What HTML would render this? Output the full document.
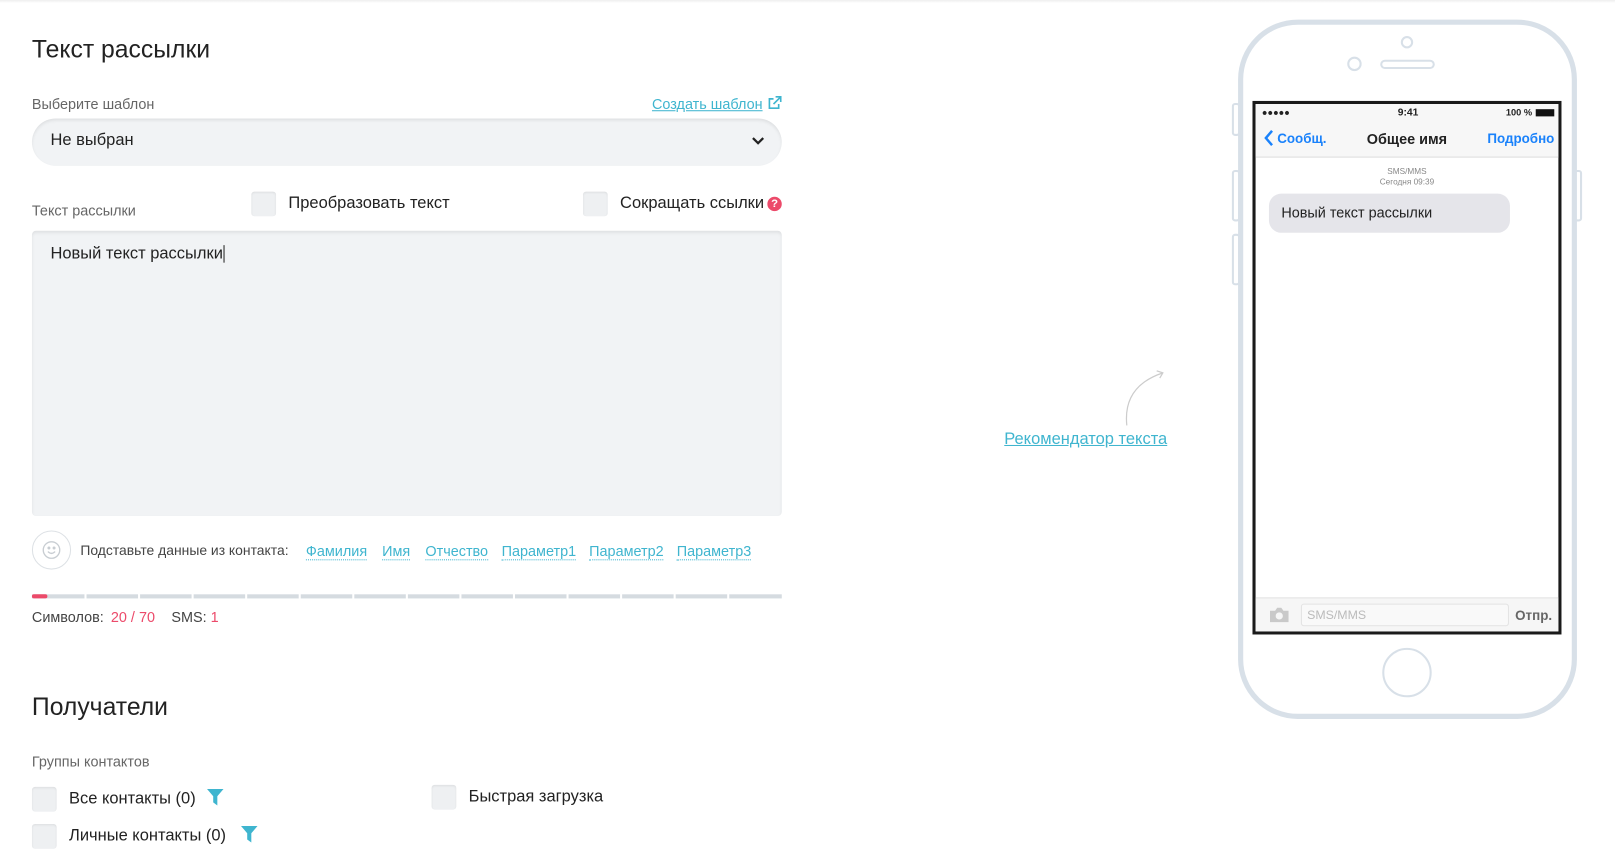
<!DOCTYPE html>
<html><head><meta charset="utf-8"><style>
*{margin:0;padding:0;box-sizing:border-box}
body{width:1615px;height:853px;background:#fff;font-family:"Liberation Sans",sans-serif;color:#222;position:relative;overflow:hidden}
#w{position:absolute;left:0;top:0;width:1568px;height:828px;transform:scale(1.03);transform-origin:0 0}
.a{position:absolute;white-space:nowrap}
.lbl{font-size:14px;color:#666}
.cb{position:absolute;width:24px;height:24px;background:#eef0f2;border-radius:3px;box-shadow:inset 0 1px 2px rgba(0,0,0,.08)}
.lnk{color:#3fb5cf;text-decoration:underline}
.dl{color:#3fb5cf;border-bottom:1px dotted #3fb5cf;font-size:14px}
.seg{position:absolute;top:577px;height:4px;background:#d5dbe0}
</style></head><body>
<div class="a" style="left:0;top:0;width:1615px;height:3px;background:linear-gradient(#eee,#fff)"></div>
<div id="w">
<div class="a" style="left:31px;top:35px;font-size:24px;color:#222">Текст рассылки</div>
<div class="a lbl" style="left:31px;top:93px">Выберите шаблон</div>
<div class="a lnk" style="left:633px;top:93px;font-size:14px">Создать шаблон </div>
<svg class="a" style="left:745px;top:93px" width="14" height="14" viewBox="0 0 14 14" fill="none" stroke="#3fb5cf" stroke-width="1.6"><path d="M11 8v4H2V3h4M8 1h5v5M13 1L6 8"/></svg>
<div class="a" style="left:31px;top:115px;width:728px;height:46px;border-radius:23px;background:#f1f3f5;box-shadow:inset 0 2px 3px rgba(0,0,0,.08)"></div>
<div class="a" style="left:49px;top:128px;font-size:16px;color:#222">Не выбран</div>
<svg class="a" style="left:729px;top:132px" width="14" height="10" viewBox="0 0 14 10"><path d="M2 2l5 5 5-5" fill="none" stroke="#222" stroke-width="2.2"/></svg>
<div class="a lbl" style="left:31px;top:196px">Текст рассылки</div>
<div class="cb" style="left:244px;top:186px"></div>
<div class="a" style="left:280px;top:189px;font-size:16px">Преобразовать текст</div>
<div class="cb" style="left:566px;top:186px"></div>
<div class="a" style="left:602px;top:189px;font-size:16px">Сокращать ссылки</div>
<div class="a" style="left:745px;top:191px;width:14px;height:14px;border-radius:7px;background:#ec4a6a;color:#fff;font-size:11px;font-weight:bold;text-align:center;line-height:14px">?</div>
<div class="a" style="left:31px;top:224px;width:728px;height:277px;border-radius:4px;background:#f1f3f5;box-shadow:inset 0 2px 3px rgba(0,0,0,.08)"></div>
<div class="a" style="left:49px;top:238px;font-size:16px">Новый текст рассылки<span style="border-left:1px solid #222;margin-left:1px"></span></div>
<div class="a" style="left:31px;top:515px;width:38px;height:38px;border-radius:19px;border:1px solid #dde1e5"></div>
<svg class="a" style="left:40px;top:524px" width="20" height="20" viewBox="0 0 20 20" fill="none" stroke="#c8cdd2" stroke-width="1.3"><circle cx="10" cy="10" r="8"/><circle cx="7.5" cy="8" r=".8" fill="#c8cdd2"/><circle cx="12.5" cy="8" r=".8" fill="#c8cdd2"/><path d="M6.5 11.5q3.5 3.5 7 0"/></svg>
<div class="a" style="left:78px;top:527px;font-size:13.5px;color:#444">Подставьте данные из контакта:</div>
<div class="a dl" style="left:297px;top:527px">Фамилия</div>
<div class="a dl" style="left:371px;top:527px">Имя</div>
<div class="a dl" style="left:413px;top:527px">Отчество</div>
<div class="a dl" style="left:487px;top:527px">Параметр1</div>
<div class="a dl" style="left:572px;top:527px">Параметр2</div>
<div class="a dl" style="left:657px;top:527px">Параметр3</div>
<div class="seg" style="left:31px;width:51px"></div>
<div class="seg" style="left:84px;width:50px"></div>
<div class="seg" style="left:136px;width:50px"></div>
<div class="seg" style="left:188px;width:50px"></div>
<div class="seg" style="left:240px;width:50px"></div>
<div class="seg" style="left:292px;width:50px"></div>
<div class="seg" style="left:344px;width:50px"></div>
<div class="seg" style="left:396px;width:50px"></div>
<div class="seg" style="left:448px;width:50px"></div>
<div class="seg" style="left:500px;width:50px"></div>
<div class="seg" style="left:552px;width:50px"></div>
<div class="seg" style="left:604px;width:50px"></div>
<div class="seg" style="left:656px;width:50px"></div>
<div class="seg" style="left:708px;width:51px"></div>
<div class="seg" style="left:31px;width:15px;background:#ec4a6a;border-radius:2px"></div>
<div class="a" style="left:31px;top:591px;font-size:14px;color:#444">Символов: <span style="color:#ec4a6a;margin-left:3px">20 / 70</span> <span style="margin-left:12px">SMS:</span> <span style="color:#ec4a6a">1</span></div>
<div class="a" style="left:31px;top:673px;font-size:24px">Получатели</div>
<div class="a lbl" style="left:31px;top:731px">Группы контактов</div>
<div class="cb" style="left:31px;top:764px"></div>
<div class="a" style="left:67px;top:767px;font-size:16px">Все контакты (0)</div>
<svg class="a" style="left:200px;top:765px" width="18" height="18" viewBox="0 0 18 18"><path d="M1 1h16l-6 7v9l-4-3V8z" fill="#3fb5cf"/></svg>
<div class="cb" style="left:31px;top:800px"></div>
<div class="a" style="left:67px;top:803px;font-size:16px">Личные контакты (0)</div>
<svg class="a" style="left:233px;top:801px" width="18" height="18" viewBox="0 0 18 18"><path d="M1 1h16l-6 7v9l-4-3V8z" fill="#3fb5cf"/></svg>
<div class="cb" style="left:419px;top:762px"></div>
<div class="a" style="left:455px;top:765px;font-size:16px">Быстрая загрузка</div>
<svg class="a" style="left:1085px;top:355px" width="50" height="60" viewBox="0 0 50 60" fill="none" stroke="#ccc" stroke-width="1.2"><path d="M9 58Q5 20 44 7M38 5l6 2-3 5"/></svg>
<div class="a lnk" style="left:975px;top:418px;font-size:16px">Рекомендатор текста</div>
<div class="a" style="left:1196px;top:100px;width:8px;height:32px;border:2px solid #d8e0e8;border-radius:3px"></div>
<div class="a" style="left:1196px;top:165px;width:8px;height:50px;border:2px solid #d8e0e8;border-radius:3px"></div>
<div class="a" style="left:1196px;top:227px;width:8px;height:50px;border:2px solid #d8e0e8;border-radius:3px"></div>
<div class="a" style="left:1528px;top:165px;width:8px;height:50px;border:2px solid #d8e0e8;border-radius:3px"></div>
<div class="a" style="left:1202px;top:19px;width:329px;height:679px;border:5px solid #d8e0e8;border-radius:58px;background:#fff"></div>
<div class="a" style="left:1360px;top:35px;width:12px;height:12px;border:2px solid #d8e0e8;border-radius:6px"></div>
<div class="a" style="left:1308px;top:55px;width:14px;height:14px;border:2px solid #d8e0e8;border-radius:7px"></div>
<div class="a" style="left:1340px;top:58px;width:53px;height:9px;border:2px solid #d8e0e8;border-radius:5px"></div>
<div class="a" style="left:1342px;top:629px;width:48px;height:48px;border:2px solid #d8e0e8;border-radius:24px"></div>
<div class="a" style="left:1216px;top:98px;width:300px;height:518px;border:3px solid #1a1a1a;background:#fff;overflow:hidden">
 <div style="position:absolute;left:0;top:0;width:294px;height:52px;background:#f7f7f7;border-bottom:1px solid #ddd"></div>
 <div style="position:absolute;left:6px;top:3px;font-size:9px;font-weight:bold">●●●●●</div>
 <div style="position:absolute;left:138px;top:3px;font-size:10px;font-weight:bold">9:41</div>
 <div style="position:absolute;left:243px;top:3px;font-size:9px;font-weight:bold">100 %</div>
 <div style="position:absolute;left:272px;top:5px;width:18px;height:7px;background:#111"></div>
 <svg style="position:absolute;left:8px;top:25px" width="10" height="16" viewBox="0 0 10 16"><path d="M8 1L2 8l6 7" fill="none" stroke="#1a82fb" stroke-width="2.4"/></svg>
 <div style="position:absolute;left:21px;top:26px;font-size:13px;color:#1a82fb;font-weight:bold">Сообщ.</div>
 <div style="position:absolute;left:108px;top:26px;font-size:14px;font-weight:bold">Общее имя</div>
 <div style="position:absolute;left:225px;top:26px;font-size:13px;color:#1a82fb;font-weight:bold">Подробно</div>
 <div style="position:absolute;left:0;width:294px;top:61px;text-align:center;font-size:8px;color:#888;line-height:10px">SMS/MMS<br>Сегодня 09:39</div>
 <div style="position:absolute;left:13px;top:87px;width:234px;height:38px;border-radius:12px;background:#e5e5ea;font-size:14px;padding:10px 12px">Новый текст рассылки</div>
 <div style="position:absolute;left:0;top:479px;width:294px;height:36px;background:#f6f6f6;border-top:1px solid #e2e2e2"></div>
 <svg style="position:absolute;left:13px;top:488px" width="20" height="16" viewBox="0 0 20 16"><path d="M1 4h5l2-3h4l2 3h5v11H1z" fill="#c9c9c9"/><circle cx="10" cy="9" r="3.5" fill="#f6f6f6"/></svg>
 <div style="position:absolute;left:44px;top:485px;width:202px;height:22px;border:1px solid #e3e3e3;border-radius:3px;background:#f9f9f9;font-size:12px;color:#bbb;padding:3px 5px">SMS/MMS</div>
 <div style="position:absolute;left:252px;top:489px;font-size:13px;color:#666;font-weight:bold">Отпр.</div>
</div>
</div>
</body></html>
